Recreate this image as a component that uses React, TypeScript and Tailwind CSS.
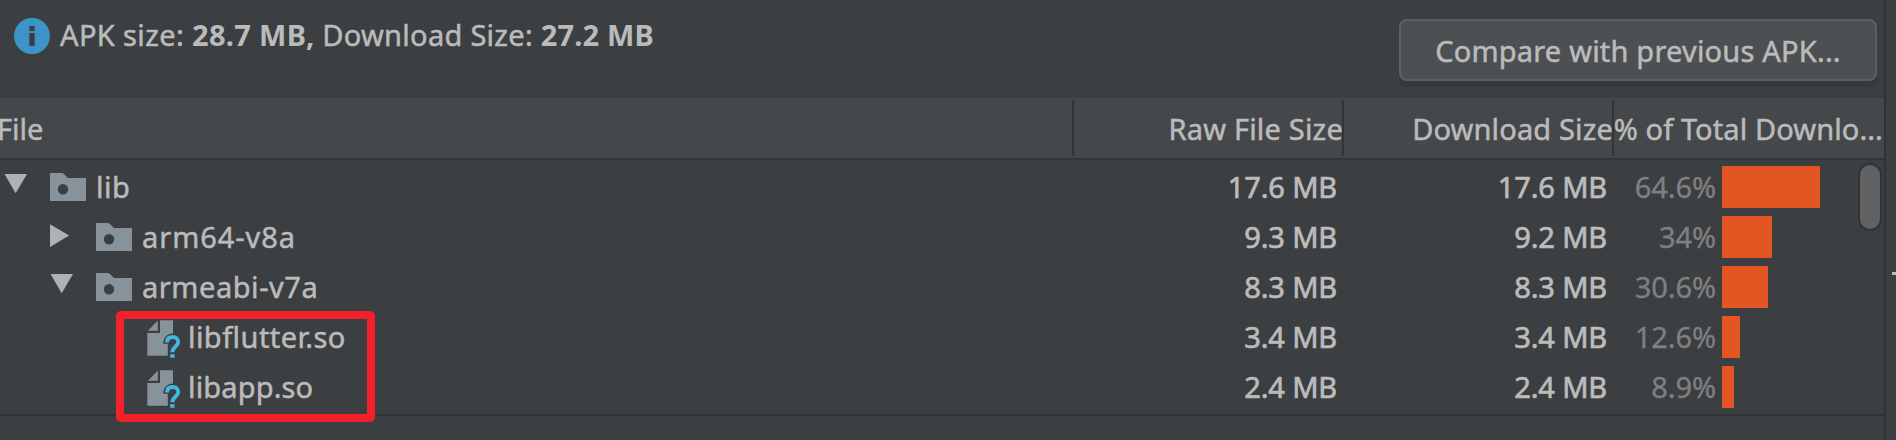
import type { ReactNode } from "react";

type Row = {
  name: string;
  tracking: string;
  indent: string;
  kind: "open" | "closed" | "file";
  raw: string;
  download: string;
  percent: string;
  bar: number;
};

const rows: Row[] = [
  { name: "lib", tracking: "tracking-[0.5px]", indent: "pl-1", kind: "open", raw: "17.6 MB", download: "17.6 MB", percent: "64.6%", bar: 98 },
  { name: "arm64-v8a", tracking: "tracking-[0.95px]", indent: "pl-[50px]", kind: "closed", raw: "9.3 MB", download: "9.2 MB", percent: "34%", bar: 50 },
  { name: "armeabi-v7a", tracking: "tracking-[0.55px]", indent: "pl-[50px]", kind: "open", raw: "8.3 MB", download: "8.3 MB", percent: "30.6%", bar: 46 },
  { name: "libflutter.so", tracking: "tracking-[0.45px]", indent: "pl-[147px]", kind: "file", raw: "3.4 MB", download: "3.4 MB", percent: "12.6%", bar: 18 },
  { name: "libapp.so", tracking: "tracking-[0.15px]", indent: "pl-[147px]", kind: "file", raw: "2.4 MB", download: "2.4 MB", percent: "8.9%", bar: 12 },
];

function InfoIcon() {
  return (
    <svg className="size-9 shrink-0" viewBox="0 0 36 36">
      <circle cx="18" cy="18" r="18" fill="#3c93c6" />
      <path d="M15.3 8h5.4v5h-5.4zM15.3 15h5.4v13h-5.4z" fill="#3c3f41" />
    </svg>
  );
}

function Arrow({ open }: { open: boolean }) {
  return (
    <svg className="h-[50px] w-[46px] shrink-0" viewBox="0 0 46 50">
      <path d={open ? "M.5 12h22.5L11.7 31.2z" : "M0 12.3v22.7L19.2 23.6z"} fill="#afb1b3" />
    </svg>
  );
}

function FolderIcon() {
  return (
    <svg className="h-[50px] w-9 shrink-0" viewBox="0 0 36 50">
      <path fillRule="evenodd" d="M0 11h11.5Q13 11 14.200 12.200L18 16h18v23H0zM13 22a5.200 5.200 0 1 0 0 10.400a5.200 5.200 0 1 0 0-10.400z" fill="#87939a" />
    </svg>
  );
}

function UnknownFileIcon() {
  return (
    <svg className="h-[50px] w-9 shrink-0" viewBox="0 0 36 50">
      <path d="M.8 18.700L10.800 8.700V18.700z" fill="#87939a" />
      <path d="M13 8.300H26V21.500C20.500 21.500 16.300 25.500 16.300 31.800H20.800V43.700H.3V21H13z" fill="#87939a" />
      <path d="M20 30.500C20 26.800 22.300 25 25.700 25C29 25 31.200 27 31.200 30C31.200 34.600 25.400 34.500 25.400 40.200" fill="none" stroke="#40b6e0" strokeWidth="3.900" />
      <path d="M23.200 42.200h4.400v3.600h-4.400z" fill="#40b6e0" />
    </svg>
  );
}

function HeaderCell({ width, children }: { width: string; children: ReactNode }) {
  return (
    <div className={`flex h-14 shrink-0 justify-end border-l-2 border-[#323537] leading-[58px] ${width}`}>
      {children}
    </div>
  );
}

export default function App() {
  return (
    <div className="flex h-[440px] w-[1896px] overflow-hidden bg-[#3c3f41] font-['Noto_Sans',sans-serif] text-[29px] whitespace-pre text-[#bbbbbb] [-webkit-text-stroke:0.5px_currentColor] [font-variant-ligatures:none]">
      <main className="flex w-[1886px] shrink-0 flex-col border-r-2 border-[#313335]">
        <header className="flex h-[98px] shrink-0 items-start justify-between pr-[7px] pl-[14px]">
          <div className="flex items-center pt-[18px]">
            <InfoIcon />
            <p className="-mt-[2px] ml-[10px] h-9 leading-9">
              <span className="tracking-[0.38px]">APK size: </span>
              <b className="tracking-[0.3px] [-webkit-text-stroke:0]">28.7 MB,</b>
              <span className="tracking-[0.28px]"> Download Size: </span>
              <b className="tracking-[0.15px] [-webkit-text-stroke:0]">27.2 MB</b>
            </p>
          </div>
          <button className="mt-[19px] flex h-[62px] w-[478px] justify-center rounded-lg border-2 border-[#5e6060] bg-[#4c5052] leading-[60px] tracking-[0.2px] shadow-[0_6px_0_#38393a]">
            Compare with previous APK...
          </button>
        </header>

        <div className="flex h-[62px] shrink-0 border-b-2 border-[#323537] bg-[#45484a] pt-0.5">
          <div className="-ml-[3px] w-[1075px] shrink-0 leading-[58px]">File</div>
          <HeaderCell width="w-[270px]"><span className="-mr-[1px] tracking-[0.2px]">Raw File Size</span></HeaderCell>
          <HeaderCell width="w-[270px]"><span className="-mr-[1px] tracking-[0.15px]">Download Size</span></HeaderCell>
          <HeaderCell width="w-[272px]"><span className="mr-px tracking-[0.1px]">% of Total Downlo...</span></HeaderCell>
        </div>

        <section className="relative h-[256px] shrink-0 border-b-2 border-[#323232] pt-0.5">
          {rows.map((row) => (
            <div key={row.name} className="flex h-[50px] leading-[50px]">
              <div className={`flex w-[1072px] shrink-0 ${row.indent}`}>
                {row.kind === "file" ? (
                  <UnknownFileIcon />
                ) : (
                  <>
                    <Arrow open={row.kind === "open"} />
                    <FolderIcon />
                  </>
                )}
                <span className={`${row.kind === "file" ? "ml-[5px]" : "ml-[10px]"} ${row.tracking}`}>{row.name}</span>
              </div>
              <span className="w-[265px] shrink-0 text-right tracking-[-0.15px] [-webkit-text-stroke:0.7px_currentColor]">{row.raw}</span>
              <span className="w-[270px] shrink-0 text-right tracking-[-0.15px] [-webkit-text-stroke:0.7px_currentColor]">{row.download}</span>
              <span className="w-[109px] shrink-0 text-right tracking-[-0.1px] text-[#808080] [-webkit-text-stroke:0.3px_currentColor]">{row.percent}</span>
              <div className="mt-1 ml-[6px] h-[42px] bg-[#e35522]" style={{ width: row.bar }} />
            </div>
          ))}
          <div className="absolute top-[3px] right-[2px] h-[68px] w-6 rounded-full border-2 border-[#313335] bg-[#616263]" />
          <div className="absolute top-[151px] left-[116px] h-[111px] w-[259px] rounded-[5px] border-8 border-[#f3212a]" />
        </section>
      </main>
      <aside className="flex flex-1 justify-end pt-[272px]">
        <div className="h-[3px] w-1 bg-[#bbbbbb]" />
      </aside>
    </div>
  );
}
